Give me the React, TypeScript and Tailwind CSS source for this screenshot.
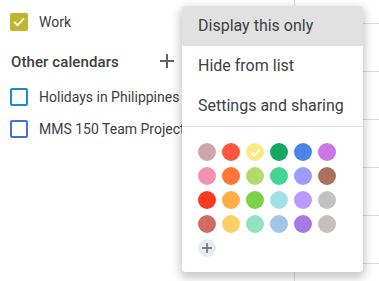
import React from 'react';

const palette = [
	['#cca6ac', '#fa573c', '#fbe983', '#16a765', '#4986e7', '#cd74e6'],
	['#f691b2', '#ff7537', '#b3dc6c', '#42d692', '#9a9cff', '#ac725e'],
	['#f83a22', '#ffad46', '#7bd148', '#9fe1e7', '#b99aff', '#c2c2c2'],
	['#d06b64', '#fad165', '#92e1c0', '#9fc6e7', '#a47ae2', '#cabdbf'],
];

const Check: React.FC<{ size?: number }> = ({ size = 14 }) => (
	<svg width={size} height={size} viewBox="0 0 24 24" fill="none">
		<path
			d="M4.5 12.5l5 5L19.5 7"
			stroke="white"
			strokeWidth="3"
			strokeLinecap="square"
		/>
	</svg>
);

const Plus: React.FC<{ size: number; stroke: number }> = ({ size, stroke }) => (
	<svg width={size} height={size} viewBox="0 0 14 14">
		<path
			d="M7 0v14M0 7h14"
			stroke="#5f6368"
			strokeWidth={stroke}
		/>
	</svg>
);

const CalendarRow: React.FC<{ label: string; color: string; checked?: boolean }> = ({
	label,
	color,
	checked,
}) => (
	<div className="h-8 flex items-center pl-[10px] gap-[11px] whitespace-nowrap">
		{checked ? (
			<div
				className="w-[18px] h-[18px] rounded-[2px] flex items-center justify-center shrink-0"
				style={{ backgroundColor: color }}
			>
				<Check />
			</div>
		) : (
			<div
				className="w-[18px] h-[18px] rounded-[2px] border-2 shrink-0"
				style={{ borderColor: color }}
			/>
		)}
		<span className="text-[14px] text-[#3c4043]">{label}</span>
	</div>
);

export default function App() {
	return (
		<div className="relative w-[379px] h-[281px] overflow-hidden bg-white font-['Roboto',sans-serif]">
			<div className="flex h-full">
				{/* sidebar */}
				<div className="w-[250px] shrink-0 pt-[6px]">
					<CalendarRow label="Work" color="#bfb52f" checked />
					<div className="h-[38px] mt-[5px] flex items-center pl-[11px]">
						<span className="text-[15px] font-medium tracking-[0.1px] text-[#3c4043] whitespace-nowrap">
							Other calendars
						</span>
					</div>
					<CalendarRow label="Holidays in Philippines" color="#1e8ac9" />
					<CalendarRow label="MMS 150 Team Project" color="#3b74d8" />
				</div>

				{/* calendar grid behind the menu */}
				<div className="flex-1 flex">
					<div className="w-[45px] border-r border-[#dadce0]" />
					<div className="flex-1 flex flex-col">
						<div className="h-6 border-b border-[#dadce0] shrink-0" />
						{[0, 1, 2, 3, 4].map((i) => (
							<div key={i} className="h-12 border-b border-[#dadce0] shrink-0" />
						))}
					</div>
				</div>
			</div>

			<div className="absolute left-[160px] top-[54px]">
				<Plus size={14} stroke={2} />
			</div>

			{/* context menu */}
			<div className="absolute left-[182px] top-[6px] w-[181px] h-[266px] bg-white rounded-[4px] shadow-[0_4px_10px_2px_rgba(0,0,0,0.22)] overflow-hidden">
				<div className="h-10 flex items-center px-4 bg-[#e1e1e1] text-[16px] text-[#3c4043]">
					Display this only
				</div>
				<div className="h-10 flex items-center px-4 text-[16px] text-[#3c4043]">
					Hide from list
				</div>
				<div className="h-10 flex items-center px-4 text-[16px] text-[#3c4043]">
					Settings and sharing
				</div>
				<div className="border-t border-[#dadce0]" />
				<div className="pt-4 px-4 flex flex-col gap-[6px]">
					{palette.map((row, r) => (
						<div key={r} className="flex gap-[6px]">
							{row.map((c, i) => (
								<div
									key={i}
									className="w-[18px] h-[18px] rounded-full flex items-center justify-center"
									style={{ backgroundColor: c }}
								>
									{r === 0 && i === 2 && <Check size={13} />}
								</div>
							))}
						</div>
					))}
					<div className="w-[18px] h-[18px] rounded-full bg-[#e8eaed] flex items-center justify-center">
						<Plus size={10} stroke={2} />
					</div>
				</div>
			</div>
		</div>
	);
}
